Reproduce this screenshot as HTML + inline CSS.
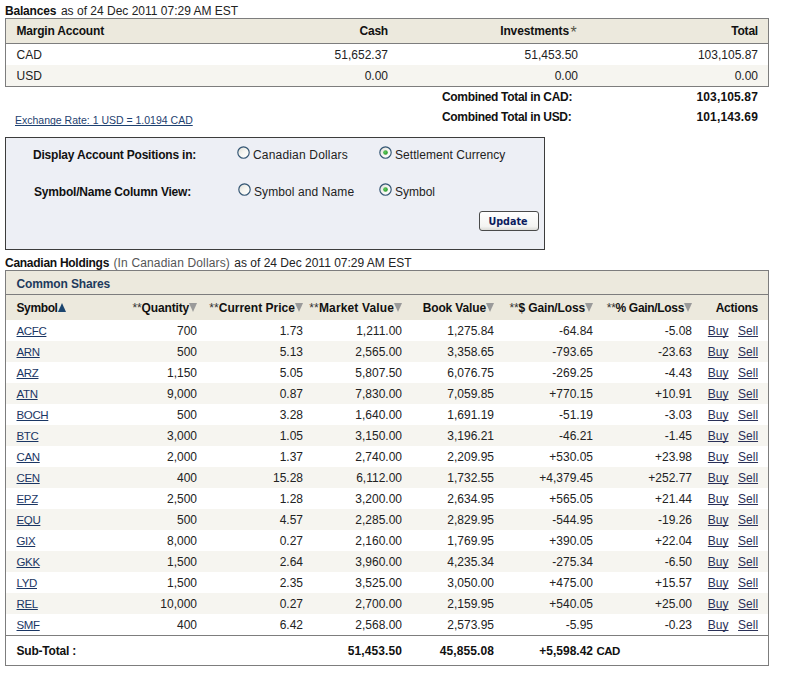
<!DOCTYPE html>
<html><head><meta charset="utf-8"><title>Balances</title>
<style>
html,body{margin:0;padding:0;background:#fff;}
body{width:790px;height:678px;position:relative;overflow:hidden;font-family:"Liberation Sans",sans-serif;font-size:12px;color:#222;}
.abs{position:absolute;white-space:nowrap;}
table{border-collapse:separate;border-spacing:0;table-layout:fixed;position:absolute;box-sizing:border-box;}
td,th{padding:0;font-size:12px;font-weight:normal;vertical-align:middle;white-space:nowrap;overflow:visible;}
.r{text-align:right;}
.l{text-align:left;}
b,.b{font-weight:bold;color:#111;letter-spacing:-0.2px;}
a{color:#1d4170;text-decoration:underline;text-decoration-skip-ink:none;}
#t1{left:5px;top:18px;width:764px;border:1px solid #7d7d7d;}
#t1 th{height:24px;background:#ece9dd;border-bottom:1px solid #7d7d7d;font-weight:bold;color:#111;letter-spacing:-0.2px;}
#t1 td{height:21px;}
#t1 tr.alt td{background:#f6f5f0;}
#t2{left:5px;top:270px;width:764px;border:1px solid #7d7d7d;}
#t2 td{height:21px;}
#t2 tr.cs td{height:23px;background:#ece9dd;border-bottom:1px solid #7d7d7d;color:#1d3a5c;font-weight:bold;letter-spacing:-0.13px;}
#t2 tr.hd th{height:25px;background:#ece9dd;font-weight:bold;color:#111;letter-spacing:-0.15px;}
#t2 tr.alt td{background:#f6f5f0;}
#t2 tr.st td{height:29px;border-top:1px solid #7d7d7d;font-weight:bold;color:#111;letter-spacing:-0.2px;}
#t2 td a.s{font-size:11.5px;letter-spacing:-0.35px;color:#1a3664;}
#t2 td a.v{color:#2b3158;}
.st2{font-weight:normal;color:#333;}
.p10{padding-right:10px;}
.tri{display:inline-block;width:0;height:0;border-left:4.5px solid transparent;border-right:4.5px solid transparent;border-top:9px solid #9a9a9a;vertical-align:-0.5px;}
.triu{display:inline-block;width:0;height:0;border-left:4.5px solid transparent;border-right:4.5px solid transparent;border-bottom:9px solid #1b456e;vertical-align:-0.5px;margin-left:0.5px;}
#form{position:absolute;left:5px;top:137px;width:538px;height:111px;border:1px solid #3c3c3c;background:#edeff5;}
.radio{position:absolute;width:13px;height:13px;}
#btn{position:absolute;left:479px;top:211px;width:56px;padding-right:2px;height:18px;border:1px solid #4a4a4a;border-radius:3px;background:linear-gradient(#fff,#f3f3f1 80%,#dcdcd8);font-family:"DejaVu Sans",sans-serif;font-weight:bold;font-size:9.6px;color:#0c1c5e;text-align:center;line-height:20px;}
</style></head><body>
<div class="abs" style="left:5px;top:4px;line-height:14px;"><b style="margin-right:1.5px">Balances</b> as of 24 Dec 2011 07:29 AM EST</div>
<table id="t1"><colgroup><col style="width:200px"><col style="width:192px"><col style="width:190px"><col style="width:180px"></colgroup>
<tr><th class="l" style="padding-left:10.5px">Margin Account</th><th class="r p10">Cash</th><th class="r p10"><span style="letter-spacing:-0.11px">Investments</span><span style="display:inline-block;width:9px;height:0;position:relative;vertical-align:baseline"><span style="position:absolute;left:1.5px;top:-11px;font-size:16px;line-height:17px;font-weight:normal;color:#555548;letter-spacing:0">*</span></span></th><th class="r p10">Total</th></tr>
<tr><td style="padding-left:10.5px">CAD</td><td class="r p10">51,652.37</td><td class="r p10">51,453.50</td><td class="r p10">103,105.87</td></tr>
<tr class="alt"><td style="padding-left:10.5px">USD</td><td class="r p10">0.00</td><td class="r p10">0.00</td><td class="r p10">0.00</td></tr>
</table>
<div class="abs b" style="left:442px;top:90px;line-height:14px;letter-spacing:-0.32px">Combined Total in CAD:</div>
<div class="abs b r" style="right:32px;top:90px;line-height:14px;letter-spacing:0.15px">103,105.87</div>
<div class="abs b" style="left:442px;top:110px;line-height:14px;letter-spacing:-0.32px">Combined Total in USD:</div>
<div class="abs b r" style="right:32px;top:110px;line-height:14px;letter-spacing:0.15px">101,143.69</div>
<a class="abs" style="left:15px;top:114px;font-size:10.5px;line-height:12px;">Exchange Rate: 1 USD = 1.0194 CAD</a>

<svg width="0" height="0" style="position:absolute"><defs><linearGradient id="gr" x1="0" y1="0" x2="1" y2="1"><stop offset="0" stop-color="#dcdcd4"/><stop offset="0.5" stop-color="#f6f6f2"/><stop offset="1" stop-color="#ffffff"/></linearGradient><radialGradient id="gd" cx="0.4" cy="0.4" r="0.7"><stop offset="0" stop-color="#62cf5e"/><stop offset="1" stop-color="#1f8f24"/></radialGradient></defs></svg>
<div id="form"></div>
<div class="abs b" style="left:33px;top:148px;line-height:14px;">Display Account Positions in:</div>
<div class="abs b" style="left:34px;top:185px;line-height:14px;">Symbol/Name Column View:</div>
<svg class="radio" style="left:237px;top:146px" width="13" height="13" viewBox="0 0 13 13"><circle cx="6.5" cy="6.5" r="5.7" fill="url(#gr)" stroke="#345674" stroke-width="1.15"/></svg><div class="abs" style="left:253px;top:148px;line-height:14px;letter-spacing:0.18px">Canadian Dollars</div>
<svg class="radio" style="left:379px;top:146px" width="13" height="13" viewBox="0 0 13 13"><circle cx="6.5" cy="6.5" r="5.7" fill="url(#gr)" stroke="#345674" stroke-width="1.15"/><circle cx="6.5" cy="6.5" r="2.3" fill="url(#gd)"/></svg><div class="abs" style="left:395px;top:148px;line-height:14px;letter-spacing:0.05px">Settlement Currency</div>
<svg class="radio" style="left:238px;top:183px" width="13" height="13" viewBox="0 0 13 13"><circle cx="6.5" cy="6.5" r="5.7" fill="url(#gr)" stroke="#345674" stroke-width="1.15"/></svg><div class="abs" style="left:254px;top:185px;line-height:14px;letter-spacing:0.1px">Symbol and Name</div>
<svg class="radio" style="left:379px;top:183px" width="13" height="13" viewBox="0 0 13 13"><circle cx="6.5" cy="6.5" r="5.7" fill="url(#gr)" stroke="#345674" stroke-width="1.15"/><circle cx="6.5" cy="6.5" r="2.3" fill="url(#gd)"/></svg><div class="abs" style="left:395px;top:185px;line-height:14px;">Symbol</div>
<div id="btn">Update</div>

<div class="abs" style="left:5px;top:256px;line-height:14px;"><b style="letter-spacing:-0.27px">Canadian Holdings</b> <span style="color:#555;letter-spacing:0.15px;margin-left:1px">(In Canadian Dollars)</span><span style="margin-left:1px"></span> as of 24 Dec 2011 07:29 AM EST</div>
<table id="t2"><colgroup><col style="width:96px"><col style="width:105px"><col style="width:106px"><col style="width:99px"><col style="width:92px"><col style="width:99px"><col style="width:99px"><col style="width:66px"></colgroup>
<tr class="cs"><td colspan="8" style="padding-left:10.5px;padding-top:2px;height:21px">Common Shares</td></tr>
<tr class="hd"><th class="l" style="padding-left:10.5px"><span style="letter-spacing:-0.38px">Symbol</span><span class="triu"></span></th><th class="r p10"><span style="letter-spacing:-0.16px"><span class="st2">**</span>Quantity</span><span class="tri"></span></th><th class="r p10"><span style="letter-spacing:0.02px"><span class="st2">**</span>Current Price</span><span class="tri"></span></th><th class="r p10"><span style="display:inline-block;margin-left:-10px"><span style="letter-spacing:0.14px"><span class="st2">**</span>Market Value</span><span class="tri"></span></span></th><th class="r p10"><span style="letter-spacing:-0.14px">Book Value</span><span class="tri"></span></th><th class="r p10"><span style="letter-spacing:-0.14px"><span class="st2">**</span>$ Gain/Loss</span><span class="tri"></span></th><th class="r p10"><span style="letter-spacing:-0.32px"><span class="st2">**</span>% Gain/Loss</span><span class="tri"></span></th><th class="r p10" style="letter-spacing:-0.23px">Actions</th></tr>
<tr><td style="padding-left:10.5px"><a class="s">ACFC</a></td><td class="r p10">700</td><td class="r p10">1.73</td><td class="r p10">1,211.00</td><td class="r p10">1,275.84</td><td class="r p10">-64.84</td><td class="r p10">-5.08</td><td class="r p10"><a class="v">Buy</a><a class="v" style="margin-left:9.5px">Sell</a></td></tr>
<tr class="alt"><td style="padding-left:10.5px"><a class="s">ARN</a></td><td class="r p10">500</td><td class="r p10">5.13</td><td class="r p10">2,565.00</td><td class="r p10">3,358.65</td><td class="r p10">-793.65</td><td class="r p10">-23.63</td><td class="r p10"><a class="v">Buy</a><a class="v" style="margin-left:9.5px">Sell</a></td></tr>
<tr><td style="padding-left:10.5px"><a class="s">ARZ</a></td><td class="r p10">1,150</td><td class="r p10">5.05</td><td class="r p10">5,807.50</td><td class="r p10">6,076.75</td><td class="r p10">-269.25</td><td class="r p10">-4.43</td><td class="r p10"><a class="v">Buy</a><a class="v" style="margin-left:9.5px">Sell</a></td></tr>
<tr class="alt"><td style="padding-left:10.5px"><a class="s">ATN</a></td><td class="r p10">9,000</td><td class="r p10">0.87</td><td class="r p10">7,830.00</td><td class="r p10">7,059.85</td><td class="r p10">+770.15</td><td class="r p10">+10.91</td><td class="r p10"><a class="v">Buy</a><a class="v" style="margin-left:9.5px">Sell</a></td></tr>
<tr><td style="padding-left:10.5px"><a class="s">BOCH</a></td><td class="r p10">500</td><td class="r p10">3.28</td><td class="r p10">1,640.00</td><td class="r p10">1,691.19</td><td class="r p10">-51.19</td><td class="r p10">-3.03</td><td class="r p10"><a class="v">Buy</a><a class="v" style="margin-left:9.5px">Sell</a></td></tr>
<tr class="alt"><td style="padding-left:10.5px"><a class="s">BTC</a></td><td class="r p10">3,000</td><td class="r p10">1.05</td><td class="r p10">3,150.00</td><td class="r p10">3,196.21</td><td class="r p10">-46.21</td><td class="r p10">-1.45</td><td class="r p10"><a class="v">Buy</a><a class="v" style="margin-left:9.5px">Sell</a></td></tr>
<tr><td style="padding-left:10.5px"><a class="s">CAN</a></td><td class="r p10">2,000</td><td class="r p10">1.37</td><td class="r p10">2,740.00</td><td class="r p10">2,209.95</td><td class="r p10">+530.05</td><td class="r p10">+23.98</td><td class="r p10"><a class="v">Buy</a><a class="v" style="margin-left:9.5px">Sell</a></td></tr>
<tr class="alt"><td style="padding-left:10.5px"><a class="s">CEN</a></td><td class="r p10">400</td><td class="r p10">15.28</td><td class="r p10">6,112.00</td><td class="r p10">1,732.55</td><td class="r p10">+4,379.45</td><td class="r p10">+252.77</td><td class="r p10"><a class="v">Buy</a><a class="v" style="margin-left:9.5px">Sell</a></td></tr>
<tr><td style="padding-left:10.5px"><a class="s">EPZ</a></td><td class="r p10">2,500</td><td class="r p10">1.28</td><td class="r p10">3,200.00</td><td class="r p10">2,634.95</td><td class="r p10">+565.05</td><td class="r p10">+21.44</td><td class="r p10"><a class="v">Buy</a><a class="v" style="margin-left:9.5px">Sell</a></td></tr>
<tr class="alt"><td style="padding-left:10.5px"><a class="s">EQU</a></td><td class="r p10">500</td><td class="r p10">4.57</td><td class="r p10">2,285.00</td><td class="r p10">2,829.95</td><td class="r p10">-544.95</td><td class="r p10">-19.26</td><td class="r p10"><a class="v">Buy</a><a class="v" style="margin-left:9.5px">Sell</a></td></tr>
<tr><td style="padding-left:10.5px"><a class="s">GIX</a></td><td class="r p10">8,000</td><td class="r p10">0.27</td><td class="r p10">2,160.00</td><td class="r p10">1,769.95</td><td class="r p10">+390.05</td><td class="r p10">+22.04</td><td class="r p10"><a class="v">Buy</a><a class="v" style="margin-left:9.5px">Sell</a></td></tr>
<tr class="alt"><td style="padding-left:10.5px"><a class="s">GKK</a></td><td class="r p10">1,500</td><td class="r p10">2.64</td><td class="r p10">3,960.00</td><td class="r p10">4,235.34</td><td class="r p10">-275.34</td><td class="r p10">-6.50</td><td class="r p10"><a class="v">Buy</a><a class="v" style="margin-left:9.5px">Sell</a></td></tr>
<tr><td style="padding-left:10.5px"><a class="s">LYD</a></td><td class="r p10">1,500</td><td class="r p10">2.35</td><td class="r p10">3,525.00</td><td class="r p10">3,050.00</td><td class="r p10">+475.00</td><td class="r p10">+15.57</td><td class="r p10"><a class="v">Buy</a><a class="v" style="margin-left:9.5px">Sell</a></td></tr>
<tr class="alt"><td style="padding-left:10.5px"><a class="s">REL</a></td><td class="r p10">10,000</td><td class="r p10">0.27</td><td class="r p10">2,700.00</td><td class="r p10">2,159.95</td><td class="r p10">+540.05</td><td class="r p10">+25.00</td><td class="r p10"><a class="v">Buy</a><a class="v" style="margin-left:9.5px">Sell</a></td></tr>
<tr><td style="padding-left:10.5px"><a class="s">SMF</a></td><td class="r p10">400</td><td class="r p10">6.42</td><td class="r p10">2,568.00</td><td class="r p10">2,573.95</td><td class="r p10">-5.95</td><td class="r p10">-0.23</td><td class="r p10"><a class="v">Buy</a><a class="v" style="margin-left:9.5px">Sell</a></td></tr>
<tr class="st"><td style="padding-left:10.5px">Sub-Total :</td><td></td><td></td><td class="r p10" style="letter-spacing:0.1px">51,453.50</td><td class="r p10" style="letter-spacing:0.1px">45,855.08</td><td class="r p10" style="letter-spacing:0">+5,598.42<span style="display:inline-block;width:0;overflow:visible;white-space:nowrap;text-align:left;vertical-align:baseline"><span style="margin-left:3.5px;font-size:11.5px;letter-spacing:-0.5px">CAD</span></span></td><td></td><td></td></tr>
</table>
</body></html>
